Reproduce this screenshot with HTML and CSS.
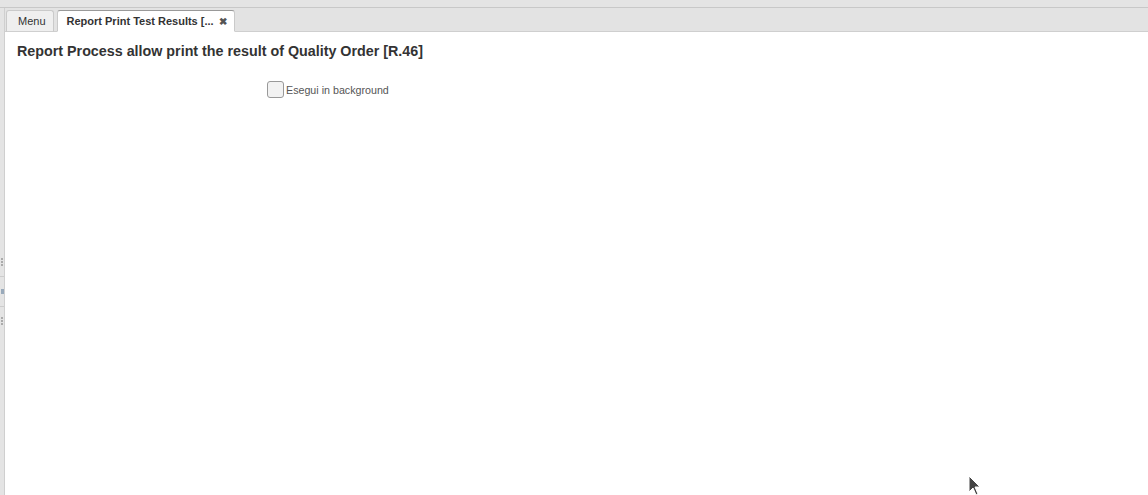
FILE: index.html
```html
<!DOCTYPE html>
<html>
<head>
<meta charset="utf-8">
<link rel="stylesheet" href="styles.css">
</head>
<body>
<div class="topstrip"></div>
<div class="main">
  <div class="sidebar">
    <div class="grip g1"></div>
    <div class="sep"></div>
    <div class="arrow"></div>
    <div class="sep"></div>
    <div class="grip g2"></div>
  </div>
  <div class="workarea">
    <div class="tabbar">
      <div class="tab">Menu</div>
      <div class="tab active">Report Print Test Results [... <span class="close">✖</span></div>
    </div>
    <div class="content">
      <h1 class="title">Report Process allow print the result of Quality Order [R.46]</h1>
      <div class="bgrow">
        <span class="checkbox"></span><span class="label">Esegui in background</span>
      </div>
    </div>
  </div>
</div>
<svg class="cursor" width="14" height="22" viewBox="0 0 14 22"><polygon points="1,1 1,17 5,13 8,20 10,19 7,12 12,12" fill="#444" stroke="#fff" stroke-width="1"/></svg>
</body>
</html>
```
FILE: styles.css
```css
html, body { margin: 0; padding: 0; }
body {
  width: 1148px; height: 495px; overflow: hidden;
  font-family: "Liberation Sans", Arial, sans-serif;
  background: #fff;
  position: relative;
  display: flex; flex-direction: column;
}
.topstrip { height: 7px; background: #e4e4e4; border-bottom: 1px solid #c8c8c8; }
.main { flex: 1; display: flex; }
.sidebar {
  width: 4px; background: #e4e4e4; border-right: 1px solid #cfcfcf;
  display: flex; flex-direction: column; padding-top: 250px;
}
.grip { height: 8px; margin: 0 1px; border-left: 2px dotted #aaa; }
.sep { height: 1px; background: #ccc; margin: 10px 0; }
.arrow { height: 5px; margin: 2px 0 2px 1px; width: 3px; background: #9ab; }
.workarea { flex: 1; display: flex; flex-direction: column; }
.tabbar {
  height: 23px; background: #e3e3e3; border-bottom: 1px solid #cfcfcf;
  display: flex; align-items: flex-end; padding-left: 1px; gap: 3px;
}
.tab {
  height: 22px; box-sizing: border-box; margin-bottom: -1px;
  border: 1px solid #cacaca; border-bottom: 1px solid #cfcfcf;
  border-radius: 3px 3px 0 0;
  background: #efefef; color: #333;
  font-size: 11px; line-height: 21px;
  padding: 0 7px 0 11px;
}
.tab.active {
  background: #fff; font-weight: bold;
  border-top-color: #999; padding: 0 7px 0 9px; color: #333;
  border-bottom: 1px solid #fff;
}
.close { font-size: 10px; color: #555; margin-left: 2px; }
.content { flex: 1; padding: 9px 12px; }
.title { margin: 0; font-size: 14.3px; font-weight: bold; color: #333; line-height: 20px; }
.bgrow { display: flex; align-items: center; margin-top: 20px; margin-left: 250px; }
.checkbox {
  width: 15px; height: 15px; border: 1px solid #999; border-radius: 3px;
  background: #f2f2f2; display: inline-block;
}
.label { font-size: 10.7px; color: #555; margin-left: 2px; }
.cursor { position: absolute; left: 968px; top: 475px; }
```
